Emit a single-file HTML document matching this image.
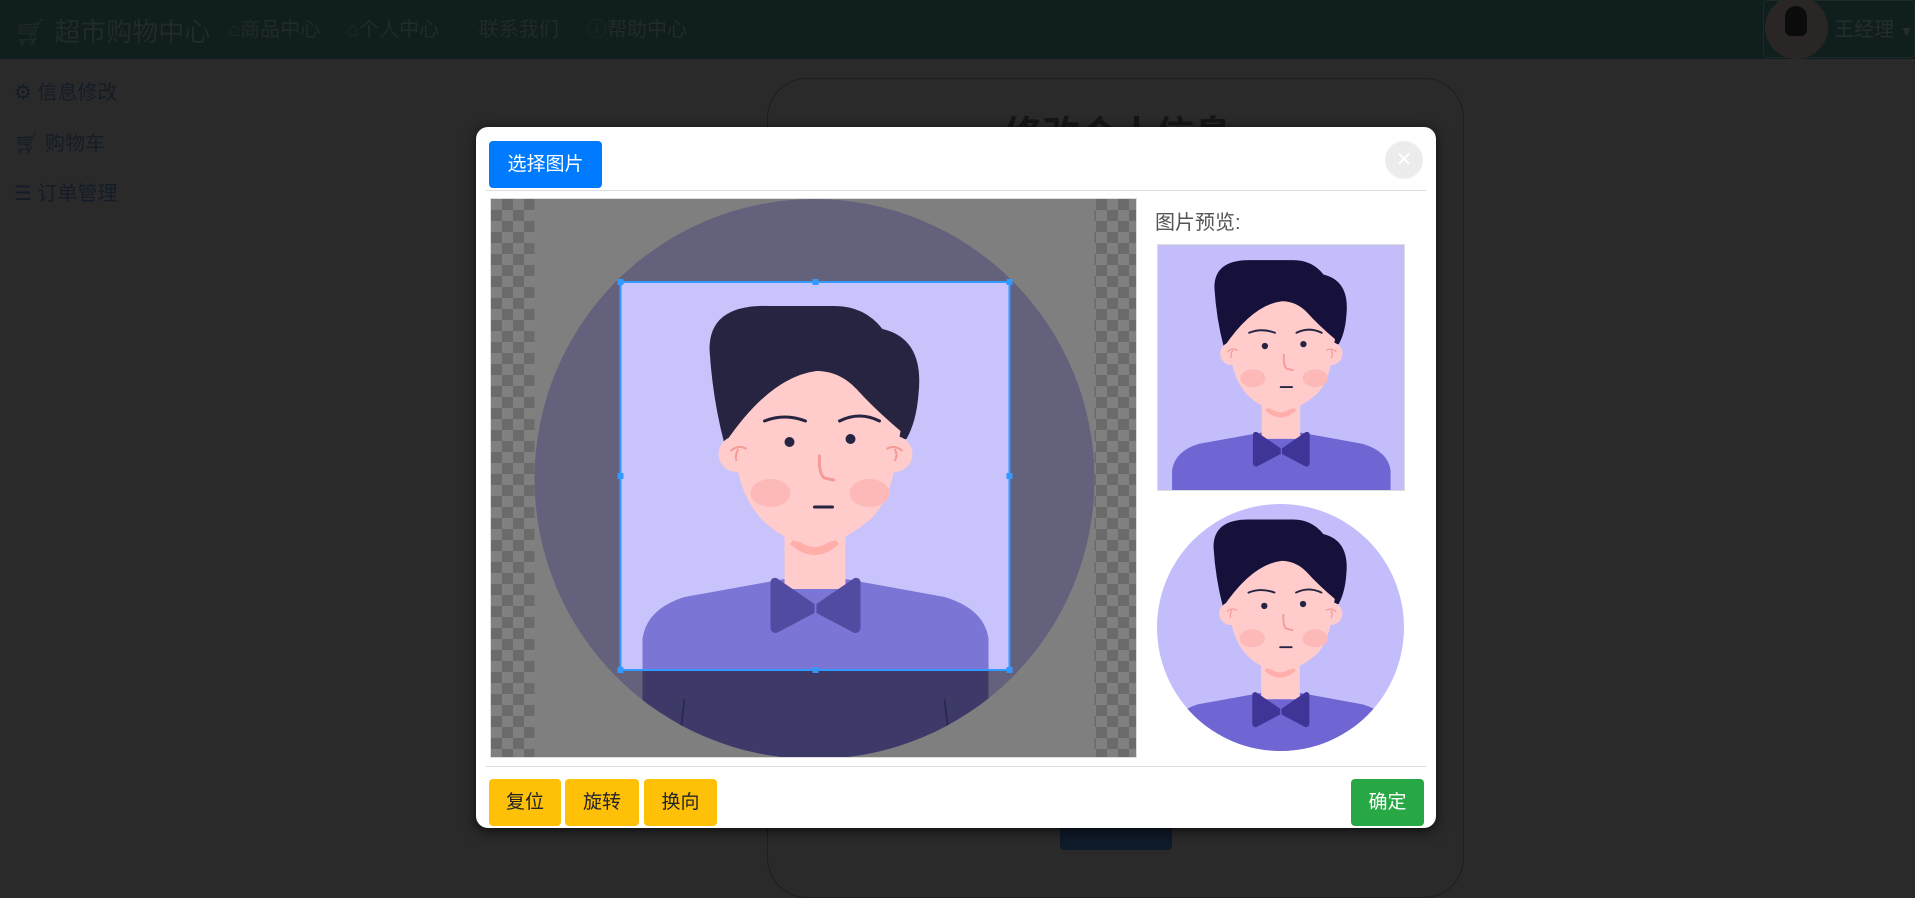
<!DOCTYPE html>
<html><head><meta charset="utf-8"><style>
*{margin:0;padding:0;box-sizing:border-box}
body{width:1915px;height:865px;overflow:hidden;background:#2a2a2a;font-family:"Liberation Sans","Noto Sans CJK SC",sans-serif;position:relative}
.nav{position:absolute;left:0;top:0;width:1915px;height:59px;background:#101e1e}
.t{position:absolute;white-space:nowrap}
.navi{color:#222a2a;font-size:20px;top:13px}
.side{color:#141c28;font-size:20px;left:14px}
.card{position:absolute;left:767px;top:78px;width:697px;height:820px;border:1px solid #1e1e1e;border-radius:40px}
.modal{position:absolute;left:476px;top:127px;width:960px;height:701px;background:#fff;border-radius:12px;box-shadow:0 3px 12px rgba(0,0,0,.7)}
.btn{position:absolute;border-radius:4px;font-size:19px;text-align:center;line-height:47px;height:47px}
.y{background:#ffc107;color:#212529;top:652px}
.crop{position:absolute;left:14px;top:71px;width:647px;height:560px;border:1px solid #ddd;overflow:hidden;
background-color:#808080;background-image:linear-gradient(45deg,#6b6b6b 25%,transparent 25%,transparent 75%,#6b6b6b 75%),linear-gradient(45deg,#6b6b6b 25%,transparent 25%,transparent 75%,#6b6b6b 75%);background-size:22px 22px;background-position:0 0,11px 11px}
.main{--bg:#c8c3fb;--hair:#272442;--shirt:#7b75d5;--bow:#514ba2}
.prev{--bg:#c3befb;--hair:#16113a;--shirt:#6f66d4;--bow:#3f3596}
</style></head><body>
<svg width="0" height="0" style="position:absolute"><defs>
<g id="av">
<circle cx="280" cy="280" r="280" fill="var(--bg)"/>
<clipPath id="cc"><circle cx="280" cy="280" r="280"/></clipPath>
<g clip-path="url(#cc)">
<path d="M108 440 Q112 410 150 398 L250 380 L311 380 L410 398 Q450 410 454 440 L454 560 L108 560Z" fill="var(--shirt)"/>
<path d="M150 500 L143 560 M410 500 L417 560" stroke="#2a2550" stroke-width="2" opacity=".4"/>
</g>
<rect x="250" y="310" width="61" height="80" fill="#ffcccb"/>
<path d="M258 342 Q280 362 302 342" stroke="#ffaeaa" stroke-width="8" fill="none"/>
<path d="M175 150 Q175 105 235 107 L300 107 Q330 107 348 130 Q390 140 384 195 Q382 222 372 240 L300 250 L190 245 Q178 200 175 150Z" fill="var(--hair)"/>
<circle cx="202" cy="255" r="18" fill="#ffcccb"/><circle cx="360" cy="255" r="18" fill="#ffcccb"/>
<path d="M190 245 Q235 178 282 172 Q305 172 322 190 Q340 210 366 232 L360 270 Q352 310 330 325 Q305 345 280 345 Q255 345 232 325 Q210 305 203 270Z" fill="#ffcccb"/>
<path d="M196 252 Q204 245 212 250 M204 250 Q200 256 202 262 M352 250 Q360 245 368 252 M360 250 Q364 256 360 262" stroke="#f59a96" stroke-width="2" fill="none"/>
<path d="M230 222 Q250 214 271 222 M305 222 Q325 212 345 222" stroke="#272442" stroke-width="3" fill="none" stroke-linecap="round"/>
<circle cx="255" cy="243" r="5" fill="#272442"/><circle cx="316" cy="240" r="5" fill="#272442"/>
<ellipse cx="236" cy="294" rx="20" ry="14" fill="#fdb8b8"/><ellipse cx="335" cy="294" rx="20" ry="14" fill="#fdb8b8"/>
<path d="M285 257 Q284 275 290 279 L299 281" stroke="#f59a96" stroke-width="3" fill="none" stroke-linecap="round"/>
<path d="M280 308 L298 308" stroke="#272442" stroke-width="3" stroke-linecap="round"/>
<path d="M242 379 L280 405 L280 414 L242 434 Q236 434 236 428 L236 384 Q236 378 242 379Z M320 379 L282 405 L282 414 L320 434 Q326 434 326 428 L326 384 Q326 378 320 379Z" fill="var(--bow)"/>
</g></defs></svg>

<div class="nav"></div>
<div class="t" style="left:14px;top:12px;color:#222a2a;font-size:26px">🛒︎ 超市购物中心</div>
<div class="t navi" style="left:228px">⌂商品中心</div>
<div class="t navi" style="left:347px">⌂个人中心</div>
<div class="t navi" style="left:467px">◌联系我们</div>
<div class="t navi" style="left:587px">ⓘ帮助中心</div>
<div style="position:absolute;left:1763px;top:0;width:152px;height:58px;border:1px solid #1e2a2a;border-radius:4px"></div>
<div style="position:absolute;left:1765px;top:-4px;width:63px;height:63px;border-radius:50%;background:#2a2626"></div>
<div style="position:absolute;left:1785px;top:6px;width:22px;height:30px;border-radius:11px 11px 6px 6px;background:#0b0b0b"></div>
<div class="t" style="left:1834px;top:13px;color:#262d2d;font-size:20px">王经理 <span style="font-size:14px">▼</span></div>
<div class="t side" style="top:76px">⚙ 信息修改</div>
<div class="t side" style="top:127px">🛒︎ 购物车</div>
<div class="t side" style="top:177px">☰ 订单管理</div>
<div class="card"></div>
<div class="t" style="left:1004px;top:104px;color:#161616;font-size:38px;font-weight:bold">修改个人信息</div>
<div style="position:absolute;left:1060px;top:816px;width:112px;height:34px;background:#0f1b2a;border-radius:4px"></div>

<div class="modal">
 <div class="btn" style="left:13px;top:14px;width:113px;background:#007bff;color:#fff">选择图片</div>
 <div style="position:absolute;left:909px;top:14px;width:38px;height:38px;border-radius:50%;background:#ececec;color:#fff;font-size:20px;text-align:center;line-height:38px">✕</div>
 <div style="position:absolute;left:10px;right:10px;top:63px;border-top:1px solid #ddd"></div>
 <div class="crop">
  <svg class="main" style="position:absolute;left:43px;top:0" width="561" height="560" viewBox="0 0 560 560">
   <rect width="560" height="560" fill="#fff"/><use href="#av"/>
   <path d="M0 0H560V560H0Z M86 83V471H475V83Z" fill="rgba(0,0,0,.5)" fill-rule="evenodd"/>
   <rect x="86" y="83" width="389" height="388" fill="none" stroke="#39f" stroke-width="2"/>
   <g fill="#39f"><rect x="83" y="80" width="6" height="6"/><rect x="278" y="80" width="6" height="6"/><rect x="472" y="80" width="6" height="6"/><rect x="83" y="274" width="6" height="6"/><rect x="472" y="274" width="6" height="6"/><rect x="83" y="468" width="6" height="6"/><rect x="278" y="468" width="6" height="6"/><rect x="472" y="468" width="6" height="6"/></g>
  </svg>
 </div>
 <div class="t" style="left:679px;top:79px;color:#555;font-size:20px">图片预览:</div>
 <svg class="prev" style="position:absolute;left:681px;top:117px;border:1px solid #ddd" width="248" height="247" viewBox="86 83 389 388"><use href="#av"/></svg>
 <svg class="prev" style="position:absolute;left:681px;top:377px;border-radius:50%" width="247" height="247" viewBox="86 83 389 388"><use href="#av"/></svg>
 <div style="position:absolute;left:10px;right:10px;top:639px;border-top:1px solid #ddd"></div>
 <div class="btn y" style="left:13px;width:72px">复位</div>
 <div class="btn y" style="left:89px;width:74px">旋转</div>
 <div class="btn y" style="left:168px;width:73px">换向</div>
 <div class="btn" style="left:875px;top:652px;width:73px;background:#28a745;color:#fff">确定</div>
</div>
</body></html>
